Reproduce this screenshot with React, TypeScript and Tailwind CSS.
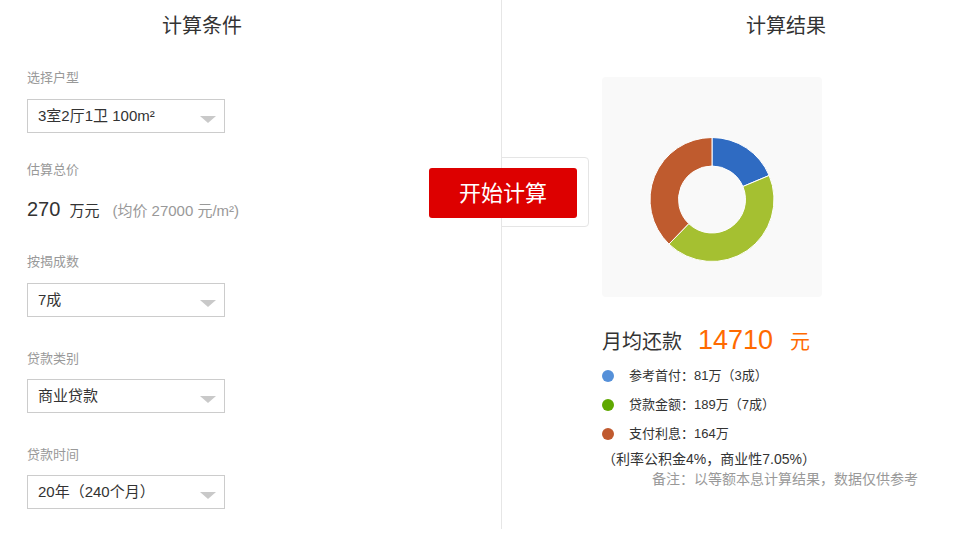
import type { ReactNode } from "react";

const FONT = "font-[family-name:'Liberation_Sans','Noto_Sans_CJK_SC',sans-serif]";

type Slice = { value: number; color: string };

const SLICES: Slice[] = [
  { value: 81, color: "#2f6bc2" },
  { value: 189, color: "#a5c031" },
  { value: 164, color: "#bf5b2e" },
];

const LEGEND = [
  { color: "#5590d9", text: "参考首付：81万（3成）" },
  { color: "#5fa800", text: "贷款金额：189万（7成）" },
  { color: "#c05a2f", text: "支付利息：164万" },
];

function polar(cx: number, cy: number, r: number, deg: number) {
  const a = ((deg - 90) * Math.PI) / 180;
  return [cx + r * Math.cos(a), cy + r * Math.sin(a)];
}

function wedge(cx: number, cy: number, ro: number, ri: number, a0: number, a1: number) {
  const large = a1 - a0 > 180 ? 1 : 0;
  const [x0, y0] = polar(cx, cy, ro, a0);
  const [x1, y1] = polar(cx, cy, ro, a1);
  const [x2, y2] = polar(cx, cy, ri, a1);
  const [x3, y3] = polar(cx, cy, ri, a0);
  return `M${x0} ${y0} A${ro} ${ro} 0 ${large} 1 ${x1} ${y1} L${x2} ${y2} A${ri} ${ri} 0 ${large} 0 ${x3} ${y3} Z`;
}

function Donut() {
  const total = SLICES.reduce((s, d) => s + d.value, 0);
  let start = 0;
  return (
    <svg width="220" height="220" viewBox="0 0 220 220">
      {SLICES.map((d) => {
        const end = start + (d.value / total) * 360;
        const path = wedge(110, 122.5, 62, 33.5, start, end);
        start = end;
        return <path key={d.color} d={path} fill={d.color} stroke="#ffffff" strokeWidth="1" />;
      })}
    </svg>
  );
}

function Label({ children, className }: { children: ReactNode; className: string }) {
  return <div className={`text-[13px] leading-[20px] text-[#999] ${className}`}>{children}</div>;
}

function Select({ value, className }: { value: string; className: string }) {
  return (
    <div
      className={`flex h-[34px] w-[198px] items-center justify-between border border-[#ccc] bg-white pl-[10px] pr-[8px] text-[15px] text-[#333] ${className}`}
    >
      <span>{value}</span>
      <span className="mt-[6px] h-0 w-0 border-x-[8px] border-t-[7px] border-x-transparent border-t-[#c9c9c9]" />
    </div>
  );
}

export default function App() {
  return (
    <div className={`relative flex h-[529px] w-[959px] bg-white ${FONT}`}>
      {/* conditions */}
      <div className="h-full w-[502px] shrink-0 border-r border-[#e6e6e6]">
        <div className="w-[404px] pt-[12px] text-center text-[20px] leading-[28px] text-[#333]">计算条件</div>
        <div className="pl-[27px]">
          <Label className="mt-[28px]">选择户型</Label>
          <Select className="mt-[11px]" value="3室2厅1卫 100m²" />

          <Label className="mt-[27px]">估算总价</Label>
          <div className="mt-[15px] flex h-[28px] items-baseline leading-[28px]">
            <span className="text-[20px] text-[#333]">270</span>
            <span className="ml-[9px] text-[15px] text-[#333]">万元</span>
            <span className="ml-[13px] text-[15px] text-[#999]">(均价 27000 元/m²)</span>
          </div>

          <Label className="mt-[29px]">按揭成数</Label>
          <Select className="mt-[11px]" value="7成" />

          <Label className="mt-[32px]">贷款类别</Label>
          <Select className="mt-[10px]" value="商业贷款" />

          <Label className="mt-[32px]">贷款时间</Label>
          <Select className="mt-[10px]" value="20年（240个月）" />
        </div>
      </div>

      {/* result */}
      <div className="flex-1 pl-[100px]">
        <div className="w-[368px] pt-[12px] text-center text-[20px] leading-[28px] text-[#333]">计算结果</div>
        <div className="mt-[37px] h-[220px] w-[220px] rounded-[4px] bg-[#f9f9f9]">
          <Donut />
        </div>
        <div className="mt-[25px] flex h-[36px] items-baseline leading-[36px]">
          <span className="text-[20px] text-[#333]">月均还款</span>
          <span className="ml-[16px] text-[27px] text-[#ff6a00]">14710</span>
          <span className="ml-[17px] text-[20px] text-[#ff6a00]">元</span>
        </div>
        <div className="mt-[3px]">
          {LEGEND.map((l) => (
            <div key={l.text} className="flex h-[29px] items-center text-[13px] text-[#333]">
              <span className="h-[12px] w-[12px] rounded-full" style={{ backgroundColor: l.color }} />
              <span className="ml-[15px]">{l.text}</span>
            </div>
          ))}
        </div>
        <div className="mt-[1px] text-[14px] leading-[20px] text-[#333]">（利率公积金4%，商业性7.05%）</div>
        <div className="w-[316px] text-right text-[14px] leading-[20px] text-[#999]">
          备注：以等额本息计算结果，数据仅供参考
        </div>
      </div>

      {/* start button over the divider */}
      <div className="absolute left-[501px] top-[157px] h-[70px] w-[88px] rounded-r-[4px] border border-[#e5e5e5] bg-white" />
      <button
        type="button"
        className="absolute left-[429px] top-[168px] h-[50px] w-[148px] rounded-[3px] bg-[#dd0000] text-[22px] text-white"
      >
        开始计算
      </button>
    </div>
  );
}
